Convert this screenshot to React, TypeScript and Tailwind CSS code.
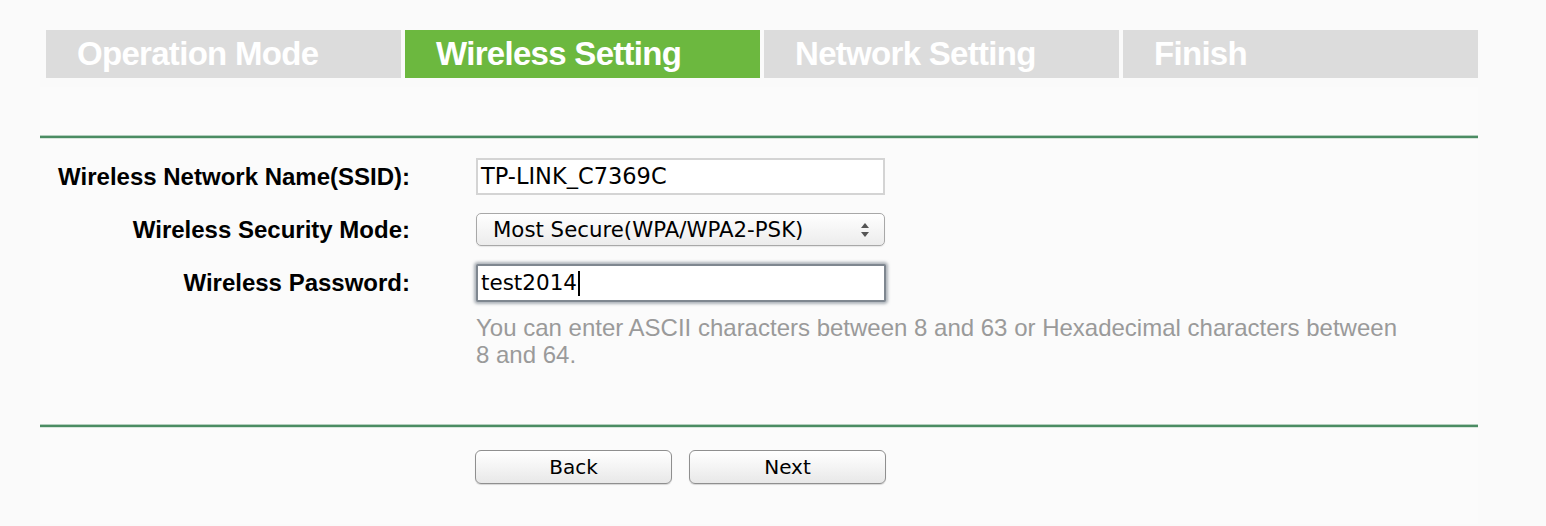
import React from 'react';

const tabs = [
  { label: 'Operation Mode', active: false },
  { label: 'Wireless Setting', active: true },
  { label: 'Network Setting', active: false },
  { label: 'Finish', active: false },
];

const labelFont = { fontFamily: '"Liberation Sans", Arial, sans-serif' };
const fieldFont = { fontFamily: '"DejaVu Sans", "Lucida Grande", sans-serif' };

const GreenRule: React.FC = () => (
  <div className="w-full">
    <div className="h-px bg-[#b4cfbe]" />
    <div className="h-[2px] bg-[#4b8c63]" />
    <div className="h-px bg-[#d7e5dc]" />
  </div>
);

const Row: React.FC<{ label: string; children: React.ReactNode }> = ({ label, children }) => (
  <div className="flex items-center">
    <div
      className="w-[370px] text-right text-[24px] leading-[24px] font-bold text-black whitespace-nowrap"
      style={labelFont}
    >
      {label}
    </div>
    <div className="ml-[66px]">{children}</div>
  </div>
);

export default function App() {
  return (
    <div className="w-[1546px] h-[526px] bg-[#fafafa] overflow-hidden">
      {/* step tabs */}
      <div className="pt-[30px] pl-[46px] flex gap-[4px]">
        {tabs.map(t => (
          <div
            key={t.label}
            className={`w-[355px] h-[48px] flex items-center pl-[31px] text-white font-bold text-[33px] tracking-[-0.7px] ${
              t.active ? 'bg-[#6cb83f]' : 'bg-[#dcdcdc]'
            }`}
            style={labelFont}
          >
            {t.label}
          </div>
        ))}
      </div>

      <div className="ml-[40px] w-[1438px] mt-[9px] bg-[#fbfbfb] pt-[48px]">
        <GreenRule />

        <div className="pt-[19px] flex flex-col">
          <Row label="Wireless Network Name(SSID):">
            <div
              className="w-[409px] h-[37px] bg-white border-2 border-[#d4d4d4] flex items-center px-[3px] text-[22.5px] text-black"
              style={fieldFont}
            >
              TP-LINK_C7369C
            </div>
          </Row>

          <div className="mt-[18px]">
            <Row label="Wireless Security Mode:">
              <div
                className="w-[409px] h-[33px] rounded-[5px] border border-[#a8a8a8] bg-gradient-to-b from-white to-[#ececec] shadow-[0_1px_1px_rgba(0,0,0,0.08)] flex items-center pl-[16px] pr-[14px] text-[21.3px] text-black"
                style={fieldFont}
              >
                <span className="flex-1">Most Secure(WPA/WPA2-PSK)</span>
                <svg width="10" height="16" viewBox="0 0 10 16">
                  <path d="M5 1 L9 6 L1 6 Z" fill="#555" />
                  <path d="M5 15 L9 10 L1 10 Z" fill="#555" />
                </svg>
              </div>
            </Row>
          </div>

          <div className="mt-[18px]">
            <Row label="Wireless Password:">
              <div
                className="w-[410px] h-[38px] bg-white border-2 border-[#7f8790] rounded-[2px] shadow-[0_0_3px_2px_rgba(110,120,132,0.55)] flex items-center px-[3px] text-[21.5px] text-black"
                style={fieldFont}
              >
                test2014
                <span className="inline-block w-[1.5px] h-[25px] bg-black ml-[1px]" />
              </div>
            </Row>
          </div>

          <div
            className="ml-[436px] mt-[12px] text-[24px] leading-[27px] text-[#9a9a9a] whitespace-nowrap"
            style={labelFont}
          >
            You can enter ASCII characters between 8 and 63 or Hexadecimal characters between
            <br />8 and 64.
          </div>
        </div>

        <div className="pt-[56px]">
          <GreenRule />
        </div>

        <div className="ml-[435px] pt-[22px] pb-[40px] flex gap-[17px]">
          {['Back', 'Next'].map(b => (
            <button
              key={b}
              className="w-[197px] h-[34px] rounded-[6px] border border-[#8f8f8f] bg-gradient-to-b from-white via-[#f4f4f4] to-[#e8e8e8] shadow-[0_1px_1px_rgba(0,0,0,0.15)] text-[20px] text-black"
              style={fieldFont}
            >
              {b}
            </button>
          ))}
        </div>
      </div>
    </div>
  );
}
